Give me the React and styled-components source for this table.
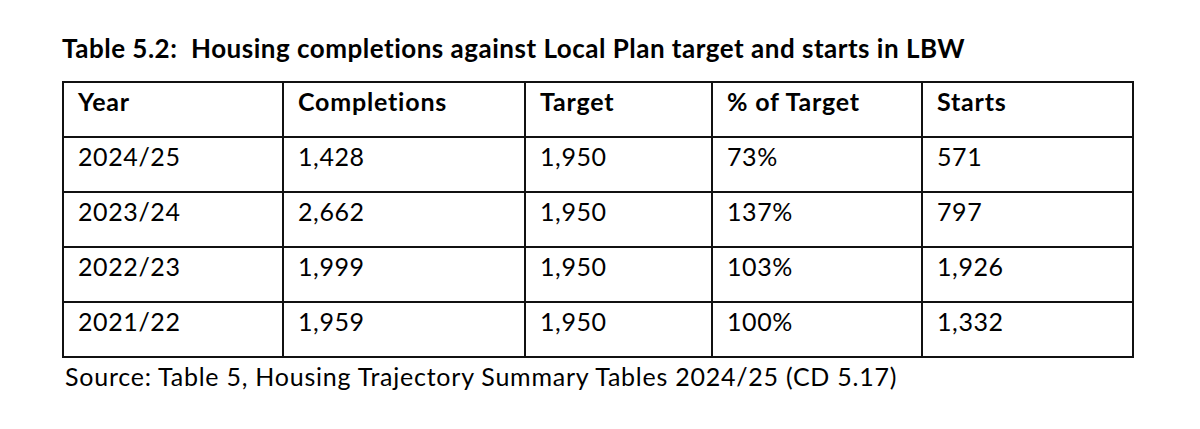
import React from 'react';
import styled, { createGlobalStyle } from 'styled-components';

const GlobalStyle = createGlobalStyle`
  html, body {
    margin: 0;
    padding: 0;
    background: #ffffff;
  }
  body {
    font-family: Lato, "Open Sans", "Liberation Sans", sans-serif;
    color: #000;
  }
`;

const Page = styled.div`
  width: 1200px;
  height: 429px;
  box-sizing: border-box;
  padding: 33px 0 0 62px;
  background: #fff;
`;

const Title = styled.h1`
  margin: 0 0 17px 0;
  font-size: 26px;
  font-weight: 700;
  line-height: 1.2;
  letter-spacing: 0.5px;
  white-space: pre;
`;

const Table = styled.table`
  border-collapse: collapse;
  width: 1070px;
  table-layout: fixed;
`;

const Cell = styled.td`
  border: 2px solid #111;
  height: 55px;
  box-sizing: border-box;
  padding: 3px 14px 0 14px;
  vertical-align: top;
  font-size: 25px;
  line-height: 1.2;
  letter-spacing: ${(p) => (p.$head ? '0.8px' : '0.6px')};
  font-weight: ${(p) => (p.$head ? 700 : 400)};
  text-align: left;
`;

const Source = styled.p`
  margin: 3px 0 0 0;
  padding-left: 3px;
  font-size: 25px;
  line-height: 1.2;
  letter-spacing: 0.76px;
`;

const widths = [220, 242, 187, 210, 211];
const head = ['Year', 'Completions', 'Target', '% of Target', 'Starts'];
const rows = [
  ['2024/25', '1,428', '1,950', '73%', '571'],
  ['2023/24', '2,662', '1,950', '137%', '797'],
  ['2022/23', '1,999', '1,950', '103%', '1,926'],
  ['2021/22', '1,959', '1,950', '100%', '1,332'],
];

const App = () => {
  return (
    <Page>
      <GlobalStyle />
      <Title>{'Table 5.2:  Housing completions against Local Plan target and starts in LBW'}</Title>
      <Table>
        <colgroup>
          {widths.map((w, i) => (
            <col key={i} style={{ width: w }} />
          ))}
        </colgroup>
        <thead>
          <tr>
            {head.map((h) => (
              <Cell as="th" $head key={h}>{h}</Cell>
            ))}
          </tr>
        </thead>
        <tbody>
          {rows.map((r) => (
            <tr key={r[0]}>
              {r.map((v, i) => (
                <Cell key={i}>{v}</Cell>
              ))}
            </tr>
          ))}
        </tbody>
      </Table>
      <Source>Source: Table 5, Housing Trajectory Summary Tables 2024/25 (CD 5.17)</Source>
    </Page>
  );
};

export default App;
